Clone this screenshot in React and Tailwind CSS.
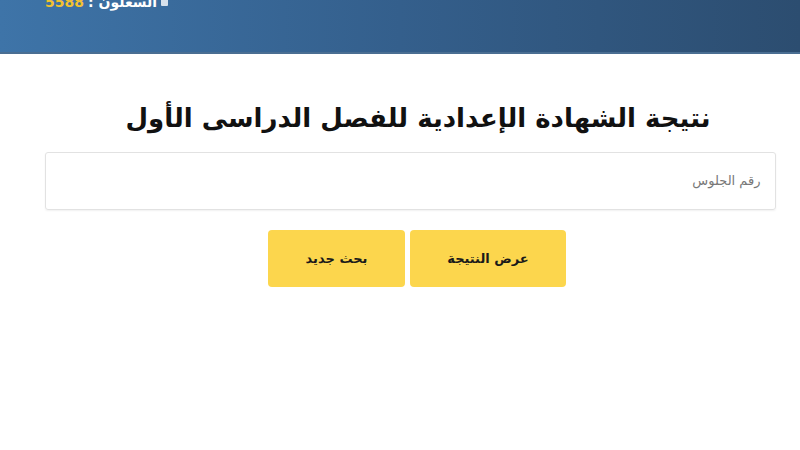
const App = () => {
  return (
    <div dir="rtl" className="w-[800px] h-[450px] bg-white overflow-hidden" style={{ fontFamily: '"DejaVu Sans", sans-serif' }}>
      <div className="h-[54px] bg-gradient-to-l from-[#2c4d70] via-[#345f8c] to-[#3e74a8] border-b-2 border-[#4a6e92] overflow-hidden relative">
        <div dir="ltr" className="absolute left-[45px] top-[-8px] flex items-center gap-1 text-[14px] font-bold">
          <span className="text-[#f2c230]">5588</span>
          <span className="text-white">: السعلون</span>
          <span className="w-[7px] h-[7px] bg-white/80 rounded-[1px]"></span>
        </div>
      </div>

      <div className="flex flex-col items-center pt-[44px]">
        <h1 className="ml-[36px] text-[26px] font-bold text-[#111] leading-[40px] tracking-tight">
          نتيجة الشهادة الإعدادية للفصل الدراسى الأول
        </h1>

        <div className="mt-[14px] ml-[20px] w-[731px] h-[58px] border border-[#e2e2e2] rounded-[3px] shadow-[0_1px_2px_rgba(0,0,0,0.06)] flex items-center pr-[14px]">
          <span className="text-[13px] text-[#777]">رقم الجلوس</span>
        </div>

        <div className="mt-[20px] ml-[34px] flex gap-[5px]">
          <button className="w-[156px] h-[57px] bg-[#fcd64d] rounded-[4px] text-[13px] font-bold text-[#1a1a1a]">
            عرض النتيجة
          </button>
          <button className="w-[137px] h-[57px] bg-[#fcd64d] rounded-[4px] text-[13px] font-bold text-[#1a1a1a]">
            بحث جديد
          </button>
        </div>
      </div>
    </div>
  );
};

export default App;
